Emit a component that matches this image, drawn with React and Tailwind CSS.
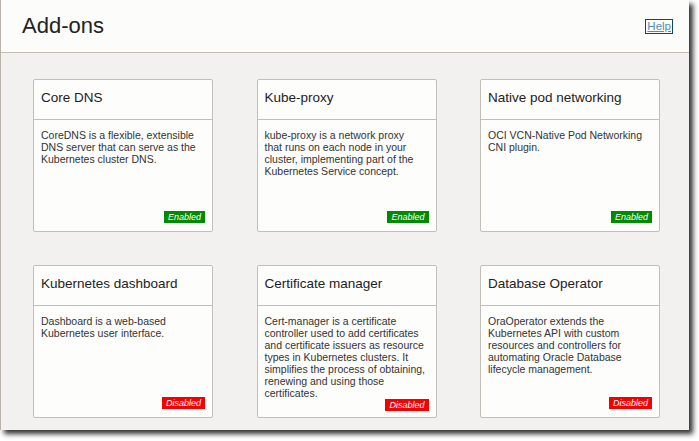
import React from "react";

const cards = [
  { title: "Core DNS", desc: ["CoreDNS is a flexible, extensible", "DNS server that can serve as the", "Kubernetes cluster DNS."], enabled: true },
  { title: "Kube-proxy", desc: ["kube-proxy is a network proxy", "that runs on each node in your", "cluster, implementing part of the", "Kubernetes Service concept."], enabled: true },
  { title: "Native pod networking", desc: ["OCI VCN-Native Pod Networking", "CNI plugin."], enabled: true },
  { title: "Kubernetes dashboard", desc: ["Dashboard is a web-based", "Kubernetes user interface."], enabled: false },
  { title: "Certificate manager", desc: ["Cert-manager is a certificate", "controller used to add certificates", "and certificate issuers as resource", "types in Kubernetes clusters. It", "simplifies the process of obtaining,", "renewing and using those", "certificates."], enabled: false },
  { title: "Database Operator", desc: ["OraOperator extends the", "Kubernetes API with custom", "resources and controllers for", "automating Oracle Database", "lifecycle management."], enabled: false },
];

function Card({ title, desc, enabled }) {
  return (
    <div className="h-[153px] w-[180px] flex flex-col rounded-[2px] border border-[#c3beb8] bg-[#fdfdfc]">
      <div className="h-[40px] shrink-0 border-b border-[#c3beb8] pl-[7px] pt-[10px] text-[13.5px] leading-[16px] text-[#222]">
        {title}
      </div>
      <div className="flex-1 flex flex-col pl-[7px] pr-[7px] pt-[9px] pb-[8px]">
        <p className="flex-1 text-[10.5px] leading-[12px] text-[#333] whitespace-nowrap">
          {desc.map((l, i) => (
            <span key={i} className="block">{l}</span>
          ))}
        </p>
        <div className="self-end">
          {enabled ? (
            <span className="block h-[12px] px-[4px] text-[9px] italic leading-[12px] text-white bg-[#008a00]">Enabled</span>
          ) : (
            <span className="block h-[12px] px-[4px] text-[9px] italic leading-[12px] text-white bg-[#f50000]">Disabled</span>
          )}
        </div>
      </div>
    </div>
  );
}

export default function App() {
  return (
    <div className="w-[699px] h-[441px] bg-white overflow-hidden" style={{ fontFamily: '"Liberation Sans", Arial, sans-serif' }}>
      <div className="w-[689px] h-[430px] flex flex-col border-l border-[#b9b3ac] bg-[#f2f1ef] shadow-[4px_4px_5px_rgba(0,0,0,0.8)]">
        <div className="h-[53px] shrink-0 flex items-center justify-between border-b border-[#c4bdb5] bg-[#fcfcfa] pl-[21px] pr-[16px]">
          <h1 className="text-[22px] leading-[22px] text-[#222]">Add-ons</h1>
          <a href="#" className="border border-[#0e4a5c] px-[1px] text-[11.5px] leading-[13px] text-[#4d8fb3] underline">Help</a>
        </div>
        <div className="grid grid-cols-[180px_180px_180px] gap-x-[43.5px] gap-y-[33px] pl-[32px] pt-[26px]">
          {cards.map((c) => (
            <Card key={c.title} {...c} />
          ))}
        </div>
      </div>
    </div>
  );
}
